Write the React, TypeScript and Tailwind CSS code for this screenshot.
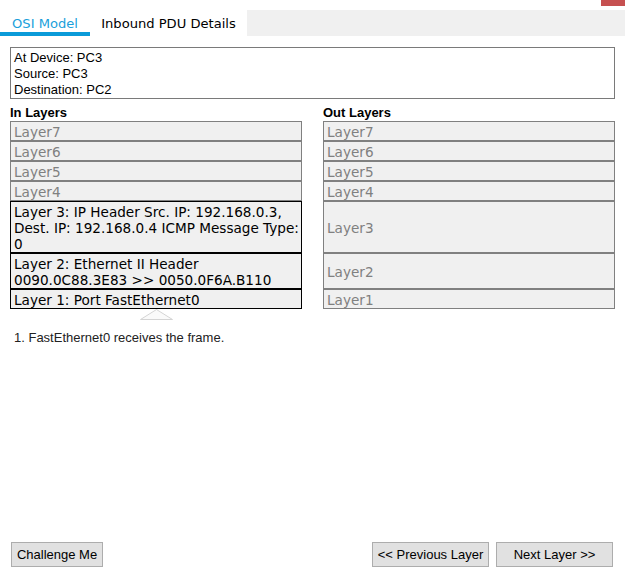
import React from 'react';

interface LayerRow {
  inText: string;
  inActive: boolean;
  outText: string;
}

const rows: LayerRow[] = [
  { inText: 'Layer7', inActive: false, outText: 'Layer7' },
  { inText: 'Layer6', inActive: false, outText: 'Layer6' },
  { inText: 'Layer5', inActive: false, outText: 'Layer5' },
  { inText: 'Layer4', inActive: false, outText: 'Layer4' },
  {
    inText: 'Layer 3: IP Header Src. IP: 192.168.0.3, Dest. IP: 192.168.0.4 ICMP Message Type: 0',
    inActive: true,
    outText: 'Layer3',
  },
  {
    inText: 'Layer 2: Ethernet II Header 0090.0C88.3E83 >> 0050.0F6A.B110',
    inActive: true,
    outText: 'Layer2',
  },
  { inText: 'Layer 1: Port FastEthernet0', inActive: true, outText: 'Layer1' },
];

const arial = "font-['Liberation_Sans',Arial,sans-serif]";
const verdana = "font-['DejaVu_Sans',Verdana,sans-serif]";

const Button: React.FC<{ children: React.ReactNode; className?: string }> = ({ children, className }) => (
  <button
    className={`h-[25px] border border-[#adadad] bg-[#e1e1e1] text-[13px] leading-[16px] text-black ${arial} ${className ?? ''}`}
  >
    {children}
  </button>
);

export default function App() {
  return (
    <div className="relative flex h-[585px] w-[625px] flex-col overflow-hidden bg-white">
      <div className="absolute right-0 top-0 h-[6px] w-[24px] bg-[#c65050]" />

      {/* tabs */}
      <div className={`mt-[10px] flex h-[26px] text-[13.1px] leading-[16px] ${verdana}`}>
        <div className="w-[90px] border-b-4 border-[#0a9bd9] pt-[6px] text-center text-[#1a9fdb]">OSI Model</div>
        <div className="w-[157px] pt-[6px] text-center text-black">Inbound PDU Details</div>
        <div className="flex-1 bg-[#f0f0f0]" />
      </div>

      {/* device info */}
      <div
        className={`mx-[10px] mt-[11px] h-[52px] border border-[#7a7a7a] px-[3px] pt-[2px] text-[13px] leading-[16px] text-black ${arial}`}
      >
        <div>At Device: PC3</div>
        <div>Source: PC3</div>
        <div>Destination: PC2</div>
      </div>

      {/* layers */}
      <div className="mx-[10px] mt-[6px] grid grid-cols-[292px_292px] gap-x-[21px]">
        <div className={`h-[16px] text-[13px] font-bold leading-[16px] text-black ${arial}`}>In Layers</div>
        <div className={`h-[16px] text-[13px] font-bold leading-[16px] text-black ${arial}`}>Out Layers</div>
        {rows.map((r) => (
          <React.Fragment key={r.outText}>
            <div
              className={`border bg-[#f0f0f0] pl-[3px] pr-0 pt-[2px] text-[13.6px] leading-[16px] ${verdana} ${
                r.inActive ? 'border-black text-black' : 'border-[#808080] text-[#808080]'
              }`}
            >
              {r.inText}
            </div>
            <div
              className={`flex items-center border border-[#808080] bg-[#f0f0f0] pl-[3px] pt-[2px] text-[13.6px] leading-[16px] text-[#808080] ${verdana}`}
            >
              {r.outText}
            </div>
          </React.Fragment>
        ))}
        <div className="flex h-[11px] justify-center">
          <svg width="33" height="11" viewBox="0 0 33 11">
            <polygon points="0.5,10.5 16.5,0.5 32.5,10.5" fill="#fafafa" stroke="#d4d4d4" />
          </svg>
        </div>
      </div>

      <div className={`ml-[14px] mt-[10px] text-[13px] leading-[16px] text-[#222] ${arial}`}>
        1. FastEthernet0 receives the frame.
      </div>

      <div className="flex-1" />

      <div className="flex items-center pb-[18px] pl-[11px] pr-[12px]">
        <Button className="w-[92px]">Challenge Me</Button>
        <div className="flex-1" />
        <Button className="w-[117px]">&lt;&lt; Previous Layer</Button>
        <Button className="ml-[7px] w-[117px]">Next Layer &gt;&gt;</Button>
      </div>
    </div>
  );
}
